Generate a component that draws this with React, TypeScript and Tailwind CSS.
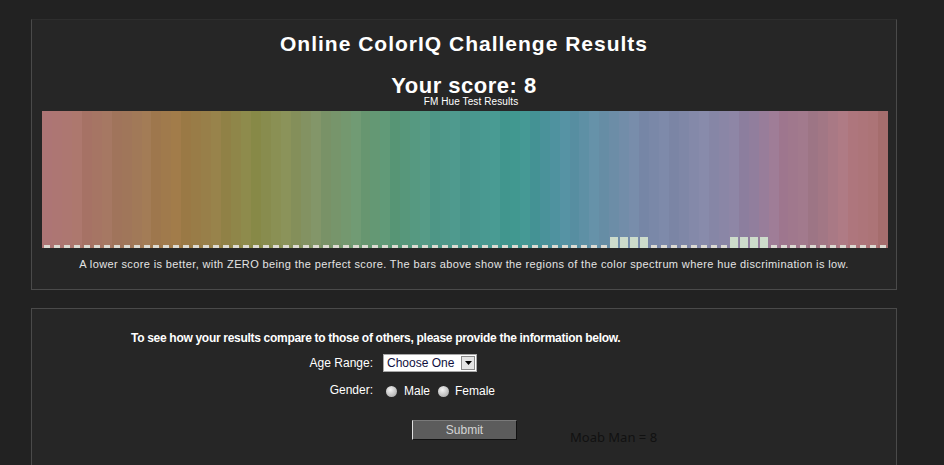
import React from "react";

const stops: [number, string][] = [
  [0, "#b07878"], [3.8, "#a87468"], [8.8, "#a07858"], [12.9, "#a07a48"], [17.2, "#948048"],
  [20.9, "#8a8c4a"], [24.2, "#889058"], [27.2, "#809468"], [30.7, "#709870"], [35, "#5a9878"],
  [39, "#509888"], [43.3, "#4a9890"], [47.3, "#409890"], [51.4, "#5090a0"], [55.8, "#6890a8"],
  [59.8, "#7888a8"], [63.8, "#8088a8"], [67.1, "#8888a8"], [70.5, "#9080a0"], [73.9, "#a07890"],
  [77.2, "#a07888"], [80.9, "#b07880"], [83.9, "#a87070"], [85, "#a87070"],
];

function hexToRgb(h: string) {
  return [parseInt(h.slice(1, 3), 16), parseInt(h.slice(3, 5), 16), parseInt(h.slice(5, 7), 16)];
}

function colorAt(i: number) {
  for (let k = 0; k < stops.length - 1; k++) {
    const [a, ca] = stops[k];
    const [b, cb] = stops[k + 1];
    if (i >= a && i <= b) {
      const t = (i - a) / (b - a);
      const ra = hexToRgb(ca);
      const rb = hexToRgb(cb);
      const n = ((i * 37) % 7) - 3;
      const c = ra.map((v, j) => Math.round(v + (rb[j] - v) * t + n));
      return `rgb(${c[0]},${c[1]},${c[2]})`;
    }
  }
  return stops[stops.length - 1][1];
}

const raised = new Set([57, 58, 59, 60, 69, 70, 71, 72]);

export default function App() {
  const cells = Array.from({ length: 85 }, (_, i) => i);
  return (
    <div
      className="min-h-[465px] w-[944px] bg-[#222222] pt-[19px] text-white"
      style={{ fontFamily: '"Liberation Sans", Arial, sans-serif' }}
    >
      <div className="ml-[31px] w-[866px]">
        {/* Panel 1 */}
        <div className="h-[271px] border border-[#4a4a4a] border-t-[#2e2e2e] bg-[#262626]">
          <div className="mt-[12px] text-center text-[21px] font-bold leading-[24px] tracking-[1px]">
            Online ColorIQ Challenge Results
          </div>
          <div className="mt-[19px] text-center text-[22px] font-bold leading-[22px] tracking-[0.5px]">
            Your score: 8
          </div>
          <div className="h-[10px] pl-[14px] text-center text-[10px] leading-[10px] tracking-[0.1px]">
            FM Hue Test Results
          </div>
          <div className="ml-[10px] mt-[4px] flex h-[137px] w-[846px]">
            {cells.map((i) => (
              <div
                key={i}
                className="flex flex-1 flex-col items-center justify-end"
                style={{ backgroundColor: colorAt(i) }}
              >
                {raised.has(i) ? (
                  <div className="h-[11px] w-[8px] bg-[#cddccb]" />
                ) : (
                  <div className="h-[3px] w-[6px] bg-[#dcdad2]" />
                )}
              </div>
            ))}
          </div>
          <div className="mt-[10px] text-center text-[11px] leading-[13px] tracking-[0.38px] text-[#e4e4e4]">
            A lower score is better, with ZERO being the perfect score. The bars above show the regions of the color spectrum where hue discrimination is low.
          </div>
        </div>

        {/* Panel 2 */}
        <div className="mt-[18px] h-[160px] border border-b-0 border-[#4a4a4a] bg-[#262626] pt-[22px]">
          <div className="pl-[99px] text-[12px] font-bold leading-[14px] tracking-[-0.3px]">
            To see how your results compare to those of others, please provide the information below.
          </div>
          <div className="mt-[9px] grid grid-cols-[341px_1fr] gap-x-[10px] gap-y-[9px] text-[12px]">
            <div className="flex h-[18px] items-center justify-end">Age Range:</div>
            <div className="flex h-[18px] items-center">
              <div className="flex h-[18px] w-[94px] items-center border border-[#a8a8a8] bg-white pl-[3px]">
                <span className="flex-1 text-[12px] leading-[14px] text-[#101040]">Choose One</span>
                <span className="mr-[1px] flex h-[14px] w-[14px] items-center justify-center border border-[#8a8a8a] bg-[#e4e4e4]">
                  <svg width="7" height="4" viewBox="0 0 7 4">
                    <path d="M0 0 L7 0 L3.5 4 Z" fill="#000" />
                  </svg>
                </span>
              </div>
            </div>
            <div className="flex h-[18px] items-center justify-end">Gender:</div>
            <div className="flex h-[18px] items-center pt-[2px] text-[12px]">
              <span className="ml-[3px] h-[11px] w-[11px] rounded-full bg-[radial-gradient(circle_at_40%_35%,#f4f4f4,#9c9c9c)]" />
              <span className="ml-[7px]">Male</span>
              <span className="ml-[8px] h-[11px] w-[11px] rounded-full bg-[radial-gradient(circle_at_40%_35%,#f4f4f4,#9c9c9c)]" />
              <span className="ml-[6px]">Female</span>
            </div>
          </div>
          <div className="mt-[21px] flex items-start">
            <div className="ml-[380px] flex h-[20px] w-[105px] items-center justify-center border border-l-[#e0e0e0] border-t-[#7a7a7a] border-r-[#111] border-b-[#111] bg-[#5c5c5c] text-[12px] text-[#d4d4d4]">
              Submit
            </div>
            <div
              className="ml-[53px] mt-[8px] text-[13px] leading-[18px] text-[#111111]"
              style={{ fontFamily: '"Noto Sans", "Open Sans", sans-serif' }}
            >
              Moab Man = 8
            </div>
          </div>
        </div>
      </div>
    </div>
  );
}
